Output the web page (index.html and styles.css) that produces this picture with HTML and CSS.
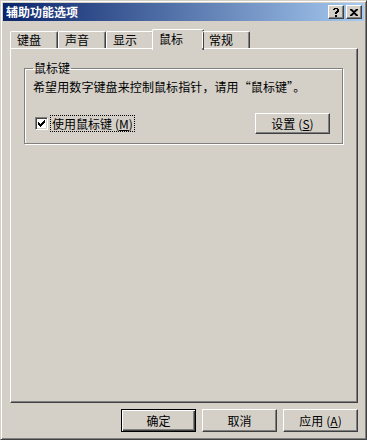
FILE: index.html
```html
<!DOCTYPE html>
<html lang="zh-CN">
<head>
<meta charset="utf-8">
<title>辅助功能选项</title>
<link rel="stylesheet" href="styles.css">
</head>
<body>
<div class="window">
  <div class="titlebar">
    <span class="title">辅助功能选项</span>
    <div class="caption-btns">
      <span class="cbtn"><svg width="8" height="9" viewBox="0 0 8 9"><path d="M1 1h1V0h4v1h1v3H6v1H5v1H3V4h1V3h1V1H3v1H1z" fill="#000"/><rect x="3" y="7" width="2" height="2" fill="#000"/></svg></span>
      <span class="cbtn"><svg width="8" height="7" viewBox="0 0 8 7"><path d="M0 0h2l2 2 2-2h2v1L5 3.5 8 6v1H6L4 5 2 7H0V6l3-2.5L0 1z" fill="#000"/></svg></span>
    </div>
  </div>
  <div class="content">
    <div class="tabs">
      <div class="tab">键盘</div>
      <div class="tab">声音</div>
      <div class="tab">显示</div>
      <div class="tab active">鼠标</div>
      <div class="tab">常规</div>
    </div>
    <div class="panel">
      <fieldset class="group">
        <legend>鼠标键</legend>
        <p class="desc">希望用数字键盘来控制鼠标指针，请用“鼠标键”。</p>
        <div class="row">
          <label class="check">
            <span class="box"><svg width="7" height="7" viewBox="0 0 7 7"><path d="M0 2h1v1h1v1h1V3h1V2h1V1h1V0h1v3H6v1H5v1H4v1H3v1H2V6H1V5H0z" fill="#000"/></svg></span>
            <span class="focus">使用鼠标键<span class="acc">(<u>M</u>)</span></span>
          </label>
          <button class="btn set">设置<span class="acc">(<u>S</u>)</span></button>
        </div>
      </fieldset>
    </div>
    <div class="footer">
      <button class="btn default">确定</button>
      <button class="btn">取消</button>
      <button class="btn">应用<span class="acc">(<u>A</u>)</span></button>
    </div>
  </div>
</div>
</body>
</html>
```
FILE: styles.css
```css
* { box-sizing: border-box; }
html, body { margin: 0; padding: 0; background: #d4d0c8; }
body {
  font-family: "Noto Sans CJK SC", "Liberation Sans", sans-serif;
  font-size: 12px;
  color: #000;
}
.window {
  width: 367px;
  height: 440px;
  border: 1px solid;
  border-color: #d4d0c8 #404040 #404040 #d4d0c8;
  box-shadow: inset 1px 1px #fff, inset -1px -1px #808080;
  padding: 2px;
  display: flex;
  flex-direction: column;
  background: #d4d0c8;
}
.titlebar {
  height: 18px;
  background: linear-gradient(to right, #0a246a, #a6caf0);
  display: flex;
  align-items: center;
  justify-content: space-between;
  padding: 0 2px 0 3px;
}
.title {
  color: #fff;
  font-weight: bold;
  font-size: 12px;
  line-height: 18px;
}
.caption-btns { display: flex; gap: 2px; }
.cbtn {
  width: 16px;
  height: 14px;
  background: #d4d0c8;
  border: 1px solid;
  border-color: #fff #404040 #404040 #fff;
  box-shadow: inset -1px -1px #808080;
  display: flex;
  align-items: center;
  justify-content: center;
}
.content {
  flex: 1;
  display: flex;
  flex-direction: column;
  padding: 8px 6px 0 7px;
}
.tabs {
  display: flex;
  height: 19px;
  align-items: flex-end;
  position: relative;
  z-index: 1;
}
.tab {
  width: 48px;
  height: 17px;
  border: 1px solid;
  border-bottom: none;
  border-color: #fff #404040 #fff #fff;
  box-shadow: inset -1px 0 #808080;
  border-radius: 2px 2px 0 0;
  padding-left: 6px;
  line-height: 16px;
}
.tab.active {
  height: 21px;
  width: 52px;
  margin: 0 -2px -2px;
  background: #d4d0c8;
  padding-left: 6px;
  line-height: 17px;
}
.panel {
  height: 355px;
  border: 1px solid;
  border-color: #fff #404040 #404040 #fff;
  box-shadow: inset -1px -1px #808080;
  padding: 12px 14px 0 13px;
}
.group {
  margin: 0;
  padding: 0 8px 9px 8px;
  border: 1px solid #808080;
  box-shadow: 1px 1px #fff, inset 1px 1px #fff;
  min-width: 0;
}
.group legend {
  padding: 0 1px;
  margin-left: 0;
  line-height: 14px;
}
.desc {
  margin: 4px 0 0 0;
  line-height: 16px;
  letter-spacing: 0.1px;
}
.row {
  display: flex;
  justify-content: space-between;
  align-items: center;
  margin-top: 18px;
}
.check {
  display: flex;
  align-items: center;
  gap: 3px;
  margin-left: 2px;
}
.box {
  width: 13px;
  height: 13px;
  background: #fff;
  border: 1px solid;
  border-color: #808080 #fff #fff #808080;
  box-shadow: inset 1px 1px #404040, inset -1px -1px #d4d0c8;
  display: flex;
  align-items: center;
  justify-content: center;
}
.focus {
  outline: 1px dotted #000;
  padding: 0 1px;
  line-height: 15px;
}
.acc { margin-left: 3px; }
u { text-decoration: underline; }
.btn {
  font-family: inherit;
  font-size: 12px;
  color: #000;
  background: #d4d0c8;
  border: 1px solid;
  border-color: #fff #404040 #404040 #fff;
  box-shadow: inset -1px -1px #808080;
  padding: 0;
  height: 21px;
  line-height: 17px;
}
.btn.set { width: 75px; margin-right: 4px; }
.footer {
  display: flex;
  justify-content: flex-end;
  gap: 6px;
  padding-top: 6px;
}
.footer .btn { width: 75px; height: 23px; }
.footer .btn.default {
  border: 1px solid #000;
  box-shadow: inset 1px 1px #fff, inset -1px -1px #404040, inset -2px -2px #808080;
}
```
